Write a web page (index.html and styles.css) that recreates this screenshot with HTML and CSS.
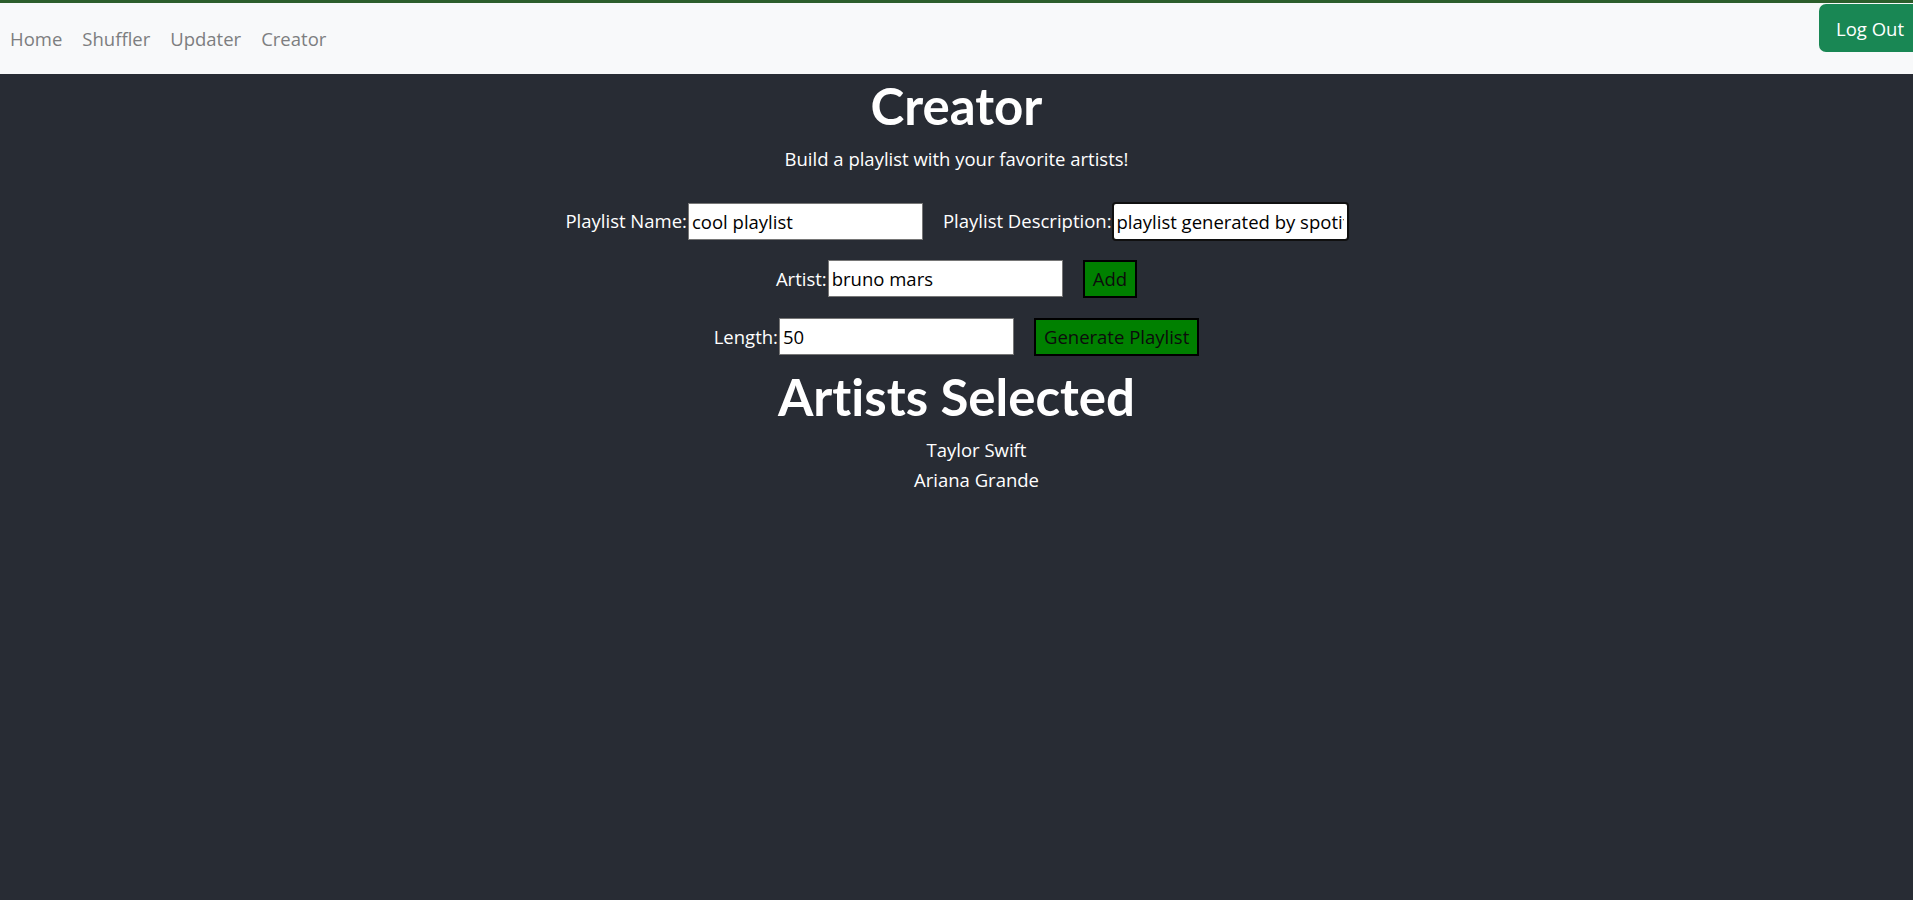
FILE: index.html
```html
<!DOCTYPE html>
<html lang="en">
<head>
<meta charset="utf-8">
<title>Creator</title>
<link rel="stylesheet" href="styles.css">
</head>
<body>
<div class="topbar"></div>
<nav class="navbar">
  <div class="nav-links">
    <a class="nav-link" href="#">Home</a>
    <a class="nav-link" href="#">Shuffler</a>
    <a class="nav-link" href="#">Updater</a>
    <a class="nav-link" href="#">Creator</a>
  </div>
  <button class="logout" type="button">Log Out</button>
</nav>
<main class="app">
  <h1 class="title">Creator</h1>
  <p class="subtitle">Build a playlist with your favorite artists!</p>
  <form class="creator-form">
    <div class="form-row">
      <label class="field">Playlist Name:<input class="text-input" type="text" value="cool playlist"></label>
      <label class="field">Playlist Description:<input class="text-input focused" type="text" value="playlist generated by spotify shuffler" spellcheck="false"></label>
    </div>
    <div class="form-row">
      <label class="field">Artist:<input class="text-input" type="text" value="bruno mars"></label>
      <button class="green-btn" type="button">Add</button>
    </div>
    <div class="form-row">
      <label class="field">Length:<input class="text-input" type="text" value="50"></label>
      <button class="green-btn" type="button">Generate Playlist</button>
    </div>
  </form>
  <h1 class="title">Artists Selected</h1>
  <ul class="artist-list">
    <li>Taylor Swift</li>
    <li>Ariana Grande</li>
  </ul>
</main>
</body>
</html>
```
FILE: styles.css
```css
html, body {
  margin: 0;
  padding: 0;
}
body {
  background: #282c34;
  font-family: "Open Sans", "Noto Sans", sans-serif;
  font-size: 18.5px;
  line-height: 1.5;
  color: #ffffff;
  height: 900px;
  overflow: hidden;
}
.topbar {
  height: 3px;
  background: #2c5e2c;
}
.navbar {
  height: 71px;
  background: #f8f9fa;
  display: flex;
  justify-content: space-between;
  align-items: flex-start;
}
.nav-links {
  display: flex;
  align-items: center;
  height: 71px;
}
.nav-link {
  color: #7d7e80;
  text-decoration: none;
  padding: 0 10px;
  font-size: 18.5px;
}
.logout {
  margin-top: 1px;
  margin-right: -8px;
  height: 48px;
  padding: 0 17px;
  background: #198754;
  color: #ffffff;
  border: none;
  border-radius: 7px;
  font-family: inherit;
  font-size: 18.5px;
}
.app {
  display: flex;
  flex-direction: column;
  align-items: center;
  text-align: center;
}
.title {
  margin: 0;
  font-family: "Lato", "Open Sans", sans-serif;
  font-size: 51px;
  font-weight: 700;
  line-height: 1.27;
  font-variant-ligatures: none;
}
.subtitle {
  margin: 6px 0 30px;
}
.creator-form {
  display: flex;
  flex-direction: column;
  align-items: center;
  gap: 20px;
  margin-bottom: 9px;
}
.form-row {
  display: flex;
  align-items: center;
  gap: 20px;
}
.field {
  display: flex;
  align-items: center;
}
.text-input {
  box-sizing: border-box;
  width: 235px;
  height: 37px;
  margin-left: 1px;
  padding: 0 3px;
  border: 1px solid #767676;
  background: #ffffff;
  color: #000000;
  font-family: inherit;
  font-size: 18.5px;
}
.text-input.focused {
  outline: 2px solid #101010;
  outline-offset: -1px;
  border-radius: 3px;
  border-color: #ffffff;
}
.green-btn {
  box-sizing: border-box;
  height: 38px;
  padding: 0 8px;
  background: #008000;
  color: #0c0c0c;
  border: 2px solid #000000;
  font-family: inherit;
  font-size: 18.5px;
}
.artist-list {
  list-style: none;
  margin: 6px 0 0;
  padding-left: 40px;
}
.artist-list li {
  line-height: 30px;
}
```
